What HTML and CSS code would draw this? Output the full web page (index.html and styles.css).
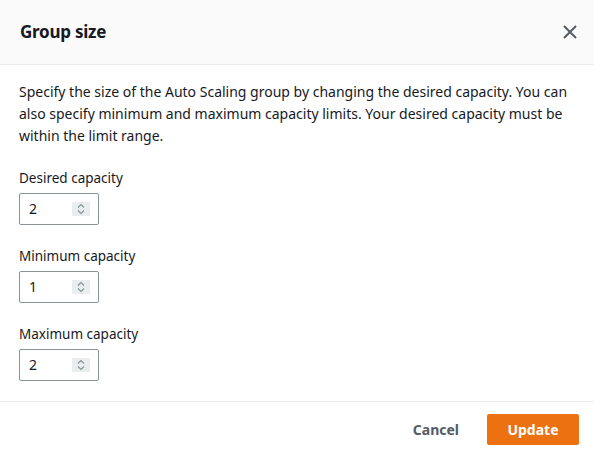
FILE: index.html
```html
<!DOCTYPE html>
<html>
<head>
<meta charset="utf-8">
<link rel="stylesheet" href="styles.css">
</head>
<body>
<div class="modal">
  <header class="modal-header">
    <h2 class="modal-title">Group size</h2>
    <button class="close-btn" aria-label="Close">
      <svg width="16" height="16" viewBox="0 0 16 16"><path d="M2 2 L14 14 M14 2 L2 14" stroke="#545b64" stroke-width="2" fill="none"/></svg>
    </button>
  </header>
  <main class="modal-body">
    <p class="desc">Specify the size of the Auto Scaling group by changing the desired capacity. You can also specify minimum and maximum capacity limits. Your desired capacity must be within the limit range.</p>
    <div class="field">
      <label class="field-label">Desired capacity</label>
      <div class="num-input"><span class="num-value">2</span><span class="spinner"><svg width="10" height="12" viewBox="0 0 10 12"><path d="M2 4.5 L5 1.5 L8 4.5 M2 7.5 L5 10.5 L8 7.5" stroke="#879596" stroke-width="1.2" fill="none"/></svg></span></div>
    </div>
    <div class="field">
      <label class="field-label">Minimum capacity</label>
      <div class="num-input"><span class="num-value">1</span><span class="spinner"><svg width="10" height="12" viewBox="0 0 10 12"><path d="M2 4.5 L5 1.5 L8 4.5 M2 7.5 L5 10.5 L8 7.5" stroke="#879596" stroke-width="1.2" fill="none"/></svg></span></div>
    </div>
    <div class="field">
      <label class="field-label">Maximum capacity</label>
      <div class="num-input"><span class="num-value">2</span><span class="spinner"><svg width="10" height="12" viewBox="0 0 10 12"><path d="M2 4.5 L5 1.5 L8 4.5 M2 7.5 L5 10.5 L8 7.5" stroke="#879596" stroke-width="1.2" fill="none"/></svg></span></div>
    </div>
  </main>
  <footer class="modal-footer">
    <button class="btn-link">Cancel</button>
    <button class="btn-primary">Update</button>
  </footer>
</div>
</body>
</html>
```
FILE: styles.css
```css
* { box-sizing: border-box; }
html, body { margin: 0; padding: 0; background: #fff; }
body {
  font-family: "Noto Sans", "Open Sans", sans-serif;
  color: #16191f;
  font-size: 14px;
  width: 594px;
  height: 456px;
  overflow: hidden;
}
.modal { display: flex; flex-direction: column; height: 456px; }
.modal-header {
  height: 65px;
  flex: none;
  background: #fafafa;
  border-bottom: 1px solid #eaeded;
  display: flex;
  align-items: center;
  justify-content: space-between;
  padding: 0 16px 0 20px;
}
.modal-title {
  margin: 0;
  font-size: 17px;
  font-weight: 700;
  line-height: 22px;
  letter-spacing: -0.25px;
}
.close-btn {
  background: none;
  border: none;
  padding: 0;
  width: 16px;
  height: 16px;
  display: flex;
}
.modal-body {
  flex: 1;
  padding: 16px 20px 0 19px;
  border-bottom: 1px solid #eaeded;
}
.desc {
  margin: 0 0 20px 0;
  line-height: 22px;
}
.field { margin-bottom: 20px; }
.field-label {
  display: block;
  font-size: 13.5px;
  line-height: 22px;
  margin-bottom: 4px;
}
.num-input {
  width: 80px;
  height: 32px;
  border: 1px solid #879596;
  border-radius: 2px;
  display: flex;
  align-items: center;
  justify-content: space-between;
  padding: 0 8px 0 9px;
}
.num-value { line-height: 20px; }
.spinner {
  width: 18px;
  height: 14px;
  background: #eaeded;
  display: flex;
  align-items: center;
  justify-content: center;
}
.modal-footer {
  height: 54px;
  flex: none;
  display: flex;
  align-items: center;
  justify-content: flex-end;
  padding: 0 15px 0 20px;
  gap: 28px;
}
.btn-link {
  background: none;
  border: none;
  font-family: inherit;
  font-size: 14px;
  font-weight: 700;
  color: #545b64;
  padding: 0;
}
.btn-primary {
  width: 92px;
  height: 31px;
  background: #ec7211;
  border: 1px solid #ec7211;
  border-radius: 2px;
  color: #fff;
  font-family: inherit;
  font-size: 14px;
  font-weight: 700;
  padding: 0;
}
```
